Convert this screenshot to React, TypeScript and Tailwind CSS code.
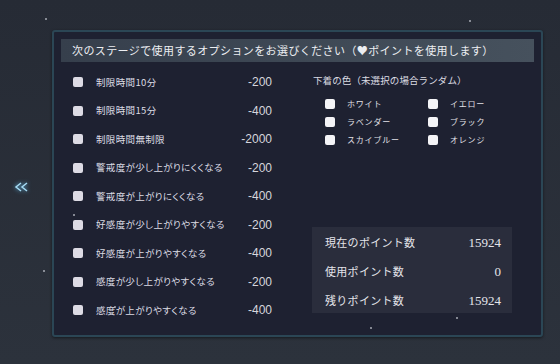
import React from "react";

const leftItems: [string, string][] = [
  ["制限時間10分", "-200"],
  ["制限時間15分", "-400"],
  ["制限時間無制限", "-2000"],
  ["警戒度が少し上がりにくくなる", "-200"],
  ["警戒度が上がりにくくなる", "-400"],
  ["好感度が少し上がりやすくなる", "-200"],
  ["好感度が上がりやすくなる", "-400"],
  ["感度が少し上がりやすくなる", "-200"],
  ["感度が上がりやすくなる", "-400"],
];

const colors = ["ホワイト", "イエロー", "ラベンダー", "ブラック", "スカイブルー", "オレンジ"];

const points: [string, string][] = [
  ["現在のポイント数", "15924"],
  ["使用ポイント数", "0"],
  ["残りポイント数", "15924"],
];

const stars: [number, number][] = [
  [45, 18],
  [469, 20],
  [43, 270],
  [73, 214],
  [456, 317],
  [370, 327],
  [114, 306],
];

export default function App() {
  return (
    <div
      className="relative w-[560px] h-[364px] overflow-hidden bg-gradient-to-b from-[#262b35] to-[#2c323c] pt-[30px] pl-[52px]"
      style={{ fontFamily: '"Noto Sans CJK JP", "Noto Sans", sans-serif' }}
    >
      {stars.map(([x, y], i) => (
        <div
          key={i}
          className="absolute w-[2px] h-[2px] rounded-full bg-[#c8ccd4] opacity-80"
          style={{ left: x, top: y }}
        />
      ))}

      <div className="absolute left-[14px] top-[182px]">
        <svg width="15" height="10" viewBox="0 0 15 10" className="drop-shadow-[0_0_2px_#5fb7e6]">
          <polyline points="7,1 2,5 7,9" fill="none" stroke="#a6dcf5" strokeWidth="1.5" />
          <polyline points="13,1 8,5 13,9" fill="none" stroke="#a6dcf5" strokeWidth="1.5" />
        </svg>
      </div>

      <div className="w-[491px] h-[307px] border-2 border-[#2b4655] rounded-[3px] bg-[#1e2131] shadow-[0_1px_3px_rgba(0,0,0,0.5)]">
        <div className="mx-[7px] mt-[7px] h-[23px] bg-gradient-to-r from-[#363f4c] to-[#46515d] flex items-center pl-[11px]">
          <span className="text-[11px] leading-none tracking-[0.4px] text-[#eceef2]">
            次のステージで使用するオプションをお選びください（♥ポイントを使用します）
          </span>
        </div>

        <div className="flex">
          <div className="ml-[19px] mt-[6px] w-[199px]">
            {leftItems.map(([label, cost]) => (
              <div key={label} className="h-[28.5px] flex items-center">
                <div className="w-[10px] h-[10px] rounded-[2px] bg-[#dddbe4]" />
                <span className="ml-[13px] text-[9.5px] tracking-[0.35px] text-[#dcdce4] leading-none [font-feature-settings:'palt']">
                  {label}
                </span>
                <span
                  className="ml-auto text-[12px] leading-none text-[#d6d6dc]"
                  style={{ fontFamily: '"Liberation Sans", sans-serif' }}
                >
                  {cost}
                </span>
              </div>
            ))}
          </div>

          <div className="ml-[41px] flex flex-col">
            <div className="mt-[12px] h-[14px] flex items-center text-[9.5px] tracking-[0.1px] text-[#dcdce3] leading-none">
              下着の色（未選択の場合ランダム）
            </div>
            <div className="mt-[7px] pl-[12px] grid grid-cols-[103px_103px]">
              {colors.map((c) => (
                <div key={c} className="h-[18px] flex items-center">
                  <div className="w-[10px] h-[10px] rounded-[2px] bg-[#f4f4f7]" />
                  <span className="ml-[12px] text-[8px] tracking-[0.8px] text-[#e2e2e8] leading-none">
                    {c}
                  </span>
                </div>
              ))}
            </div>
            <div className="mt-[78px] -ml-[1px] w-[200px] h-[86px] bg-[#2a2d3c] pt-[1px] pl-[13px] pr-[11px]">
              {points.map(([label, val]) => (
                <div key={label} className="h-[29px] flex items-center">
                  <span className="text-[11px] tracking-[0.3px] text-[#e4e4ea] leading-none">{label}</span>
                  <span
                    className="ml-auto text-[13px] leading-none text-[#e4e4ea]"
                    style={{ fontFamily: '"Liberation Serif", serif' }}
                  >
                    {val}
                  </span>
                </div>
              ))}
            </div>
          </div>
        </div>
      </div>
    </div>
  );
}
